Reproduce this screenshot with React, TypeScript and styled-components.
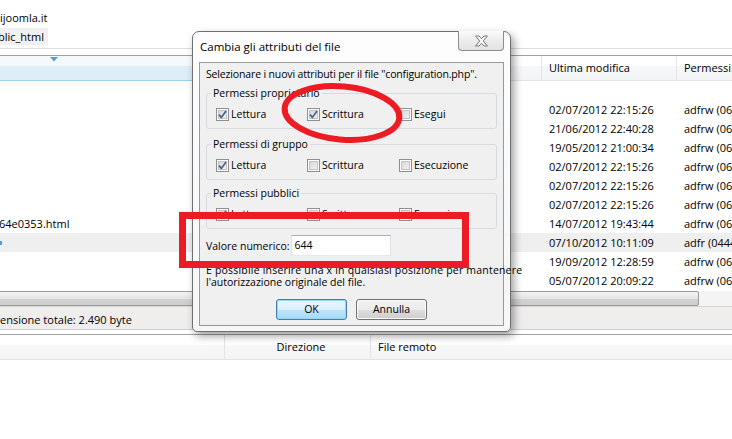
import React from 'react';
import styled, { createGlobalStyle } from 'styled-components';

const GlobalStyle = createGlobalStyle`
  html, body { margin: 0; padding: 0; background: #fff; }
  body {
    font-family: "Open Sans", "Noto Sans", sans-serif;
    font-size: 11px;
    color: #000;
  }
`;

const Screen = styled.div`
  position: relative;
  width: 732px;
  height: 439px;
  overflow: hidden;
  background: #fff;
  display: flex;
  flex-direction: column;
`;

const TopBar = styled.div`
  height: 49px;
  box-sizing: border-box;
  padding-top: 10px;
  border-bottom: 1px solid #dcdcdc;
  display: flex;
  flex-direction: column;
  margin-bottom: 6px;
`;

const HostLine = styled.div`
  height: 16px;
  line-height: 16px;
  white-space: nowrap;
`;

const PathChip = styled.div`
  margin-top: 2px;
  width: 48px;
  height: 17px;
  line-height: 17px;
  background: #f0f0f0;
  overflow: hidden;
  white-space: nowrap;

  span { margin-left: -2px; }
`;

const ListPanel = styled.div`
  border-top: 1px solid #a0a0a0;
  display: flex;
  flex-direction: column;
`;

const HeaderRow = styled.div`
  display: flex;
  height: 25px;
  white-space: nowrap;
`;

const HeaderCell = styled.div<{ $w: number; $sorted?: boolean; $center?: boolean }>`
  position: relative;
  flex: 0 0 ${p => p.$w}px;
  box-sizing: border-box;
  height: 25px;
  line-height: 24px;
  padding-left: 7px;
  text-align: ${p => (p.$center ? 'center' : 'left')};
  border-right: 1px solid #e3e4e6;
  border-bottom: 1px solid ${p => (p.$sorted ? '#9dd0ea' : '#e3e4e6')};
  background: ${p =>
    p.$sorted
      ? 'linear-gradient(#f3f9fc 0, #f3f9fc 40%, #ddeef7 40%, #ddeef7 100%)'
      : 'linear-gradient(#ffffff 0, #ffffff 40%, #f7f8fa 40%, #f3f4f6 100%)'};
`;

const SortArrow = styled.svg`
  position: absolute;
  top: 1px;
  left: 50px;
`;

const Row = styled.div<{ $hl?: boolean }>`
  display: flex;
  height: 19px;
  line-height: 19px;
  white-space: nowrap;
  background: ${p => (p.$hl ? '#efefef' : '#fff')};
`;

const Cell = styled.div<{ $w: number }>`
  flex: 0 0 ${p => p.$w}px;
  box-sizing: border-box;
  padding-left: 7px;
  overflow: hidden;
`;

const NameCell = styled(Cell)`
  padding-left: 0;
  display: flex;
  align-items: center;

  span { margin-left: -1px; }
`;

const LinkMark = styled.i`
  display: block;
  width: 2px;
  height: 4px;
  background: #4a9ee6;
`;

const HScroll = styled.div`
  margin-top: 1px;
  height: 15px;
  background: #f4f4f4;
  display: flex;
`;

const HThumb = styled.div`
  width: 702px;
  margin-left: -3px;
  box-sizing: border-box;
  border: 1px solid #9a9a9a;
  border-radius: 2px;
  background: linear-gradient(#f3f3f3, #e4e4e4 50%, #d3d3d3 50%, #cdcdcd);
`;

const StatusBar = styled.div`
  height: 24px;
  box-sizing: border-box;
  border-top: 1px solid #d6d6d6;
  border-bottom: 1px solid #cfcfcf;
  background: #f0eded;
  line-height: 24px;
  padding-top: 1px;
  white-space: nowrap;
`;

const QueuePanel = styled.div`
  margin-top: 4px;
  border-top: 1px solid #a0a0a0;
  flex: 1;
`;

const Dialog = styled.div`
  position: absolute;
  left: 192px;
  top: 31px;
  width: 319px;
  height: 301px;
  box-sizing: border-box;
  border: 1px solid #6f6f6f;
  border-radius: 7px 7px 5px 5px;
  background: linear-gradient(#fdfdfd, #f6f6f6);
  box-shadow: 3px 4px 9px rgba(0, 0, 0, 0.38);
  display: flex;
  flex-direction: column;
  font-size: 10.5px;
`;

const TitleBar = styled.div`
  height: 30px;
  display: flex;
  align-items: flex-start;
`;

const TitleText = styled.div`
  padding-left: 7px;
  margin-top: 6px;
  font-size: 11.5px;
  line-height: 18px;
  color: #000;
`;

const CloseButton = styled.div`
  margin-left: auto;
  margin-right: 6px;
  width: 46px;
  height: 20px;
  margin-top: -1px;
  box-sizing: border-box;
  border: 1px solid #8c8c8c;
  border-top: none;
  border-radius: 0 0 4px 4px;
  background: linear-gradient(#fbfbfb, #ececec 50%, #e2e2e2);
  display: flex;
  align-items: center;
  justify-content: center;
`;

const Client = styled.div`
  flex: 1;
  margin: 0 6px 5px 6px;
  border: 1px solid #999;
  background: #f0f0f0;
  padding: 4px 6px 0 6px;
  display: flex;
  flex-direction: column;
`;

const Text = styled.div<{ $tight?: boolean }>`
  line-height: 14px;
  white-space: nowrap;
  letter-spacing: ${p => (p.$tight ? '-0.15px' : 'normal')};
`;

const GroupBox = styled.fieldset<{ $mt: number }>`
  margin: ${p => p.$mt}px 0 0 0;
  padding: 7px 0 7px 9px;
  border: 1px solid #d3dce2;
  border-radius: 3px;
  min-width: 0;
`;

const Legend = styled.legend`
  padding: 0 2px;
  margin-left: -5px;
  line-height: 14px;
`;

const CheckRow = styled.div`
  display: grid;
  grid-template-columns: 91px 92px auto;
  height: 14px;
`;

const CheckItem = styled.label`
  display: flex;
  align-items: center;
  gap: 2px;
  line-height: 14px;
`;

const Box = styled.span`
  width: 13px;
  height: 13px;
  box-sizing: border-box;
  border: 1px solid #8e8f8f;
  background: linear-gradient(135deg, #d2d2d2, #f7f7f7);
  box-shadow: inset 0 0 0 1px #fff, inset 0 0 0 2px #c2c2c2;
  display: flex;
  align-items: center;
  justify-content: center;
`;

const ValueRow = styled.div`
  margin-top: 6px;
  display: flex;
  align-items: center;
  gap: 1px;
`;

const NumInput = styled.div`
  width: 100px;
  height: 21px;
  box-sizing: border-box;
  border: 1px solid #abadb3;
  border-left-color: #e2e3ea;
  border-right-color: #dbdfe6;
  border-bottom-color: #e3e9ef;
  background: #fff;
  padding-left: 3px;
  line-height: 19px;
`;

const Note = styled.div`
  margin-top: 8px;
  line-height: 12px;
  white-space: nowrap;

  span { letter-spacing: 0.2px; }
`;

const Buttons = styled.div`
  margin-top: 11px;
  display: flex;
  justify-content: center;
  gap: 9px;
`;

const Button = styled.div<{ $default?: boolean }>`
  width: 71px;
  height: 21px;
  box-sizing: border-box;
  border: 1px solid ${p => (p.$default ? '#3c7fb1' : '#707070')};
  border-radius: 3px;
  text-align: center;
  line-height: 19px;
  background: ${p =>
    p.$default
      ? 'linear-gradient(#eaf6fd, #d9f0fc 50%, #bee6fd 50%, #a7d9f5)'
      : 'linear-gradient(#f2f2f2, #ebebeb 50%, #dddddd 50%, #cfcfcf)'};
  box-shadow: inset 0 0 0 1px ${p => (p.$default ? '#97d7f8' : '#fcfcfc')};
`;

const Annotations = styled.svg`
  position: absolute;
  left: 0;
  top: 0;
  pointer-events: none;
`;

const rows = [
  { name: '', date: '', perm: '' },
  { name: '', date: '02/07/2012 22:15:26', perm: 'adfrw (0644)' },
  { name: '', date: '21/06/2012 22:40:28', perm: 'adfrw (0644)' },
  { name: '', date: '19/05/2012 21:00:34', perm: 'adfrw (0644)' },
  { name: '', date: '02/07/2012 22:15:26', perm: 'adfrw (0644)' },
  { name: '', date: '02/07/2012 22:15:26', perm: 'adfrw (0644)' },
  { name: '', date: '02/07/2012 22:15:26', perm: 'adfrw (0644)' },
  { name: '64e0353.html', date: '14/07/2012 19:43:44', perm: 'adfrw (0644)' },
  { name: '', date: '07/10/2012 10:11:09', perm: 'adfr (0444)', hl: true, mark: true },
  { name: '', date: '19/09/2012 12:28:59', perm: 'adfrw (0644)' },
  { name: '', date: '05/07/2012 20:09:22', perm: 'adfrw (0644)' },
];

const Check = ({ checked }: { checked?: boolean }) => (
  <Box>
    {checked && (
      <svg width="9" height="9" viewBox="0 0 9 9">
        <path d="M1 4.6 L3.4 7.4 L8 1" fill="none" stroke="#4a5f94" strokeWidth="1.7" />
      </svg>
    )}
  </Box>
);

type Perm = { label: string; checked?: boolean };

const groups: { title: string; mt: number; items: Perm[] }[] = [
  {
    title: 'Permessi proprietario',
    mt: 5,
    items: [{ label: 'Lettura', checked: true }, { label: 'Scrittura', checked: true }, { label: 'Esegui' }],
  },
  {
    title: 'Permessi di gruppo',
    mt: 8,
    items: [{ label: 'Lettura', checked: true }, { label: 'Scrittura' }, { label: 'Esecuzione' }],
  },
  {
    title: 'Permessi pubblici',
    mt: 6,
    items: [{ label: 'Lettura', checked: true }, { label: 'Scrittura' }, { label: 'Esecuzione' }],
  },
];

export default function App() {
  return (
    <>
      <GlobalStyle />
      <Screen>
        <TopBar>
          <HostLine>ijoomla.it</HostLine>
          <PathChip><span>blic_html</span></PathChip>
        </TopBar>

        <ListPanel>
          <HeaderRow>
            <HeaderCell $w={260} $sorted>
              <SortArrow width="8" height="5" viewBox="0 0 8 5">
                <path d="M0 0 H8 L4 4.5 Z" fill="#569ed0" />
              </SortArrow>
            </HeaderCell>
            <HeaderCell $w={80} />
            <HeaderCell $w={202} />
            <HeaderCell $w={135}>Ultima modifica</HeaderCell>
            <HeaderCell $w={110}>Permessi</HeaderCell>
          </HeaderRow>
          {rows.map((r, i) => (
            <Row key={i} $hl={r.hl}>
              <NameCell $w={260}>
                {r.mark && <LinkMark />}
                <span>{r.name}</span>
              </NameCell>
              <Cell $w={80} />
              <Cell $w={202} />
              <Cell $w={135}>{r.date}</Cell>
              <Cell $w={110}>{r.perm}</Cell>
            </Row>
          ))}
          <HScroll>
            <HThumb />
          </HScroll>
        </ListPanel>

        <StatusBar>ensione totale: 2.490 byte</StatusBar>

        <QueuePanel>
          <HeaderRow>
            <HeaderCell $w={225} />
            <HeaderCell $w={146} $center>Direzione</HeaderCell>
            <HeaderCell $w={400}>File remoto</HeaderCell>
          </HeaderRow>
        </QueuePanel>

        <Dialog>
          <TitleBar>
            <TitleText>Cambia gli attributi del file</TitleText>
            <CloseButton>
              <svg width="15" height="12" viewBox="0 0 15 12">
                <path
                  d="M1.5 1 H5 L7.5 3.6 L10 1 H13.5 L9.3 6 L13.5 11 H10 L7.5 8.4 L5 11 H1.5 L5.7 6 Z"
                  fill="#f4f4f4"
                  stroke="#7b7b7b"
                  strokeWidth="1"
                  strokeLinejoin="round"
                />
              </svg>
            </CloseButton>
          </TitleBar>
          <Client>
            <Text $tight>Selezionare i nuovi attributi per il file "configuration.php".</Text>
            {groups.map(g => (
              <GroupBox key={g.title} $mt={g.mt}>
                <Legend>{g.title}</Legend>
                <CheckRow>
                  {g.items.map(it => (
                    <CheckItem key={it.label}>
                      <Check checked={it.checked} />
                      {it.label}
                    </CheckItem>
                  ))}
                </CheckRow>
              </GroupBox>
            ))}
            <ValueRow>
              <Text>Valore numerico:</Text>
              <NumInput>644</NumInput>
            </ValueRow>
            <Note>
              <span>È possibile inserire una x in qualsiasi posizione per mantenere</span>
              <br />
              l'autorizzazione originale del file.
            </Note>
            <Buttons>
              <Button $default>OK</Button>
              <Button>Annulla</Button>
            </Buttons>
          </Client>
        </Dialog>

        <Annotations width="732" height="439" viewBox="0 0 732 439">
          <ellipse
            cx="342"
            cy="113"
            rx="57.5"
            ry="26.5"
            fill="none"
            stroke="#ed1c24"
            strokeWidth="6"
            transform="rotate(5 342 113)"
          />
          <rect x="182.5" y="215.5" width="283" height="49" fill="none" stroke="#ed1c24" strokeWidth="7" />
        </Annotations>
      </Screen>
    </>
  );
}
